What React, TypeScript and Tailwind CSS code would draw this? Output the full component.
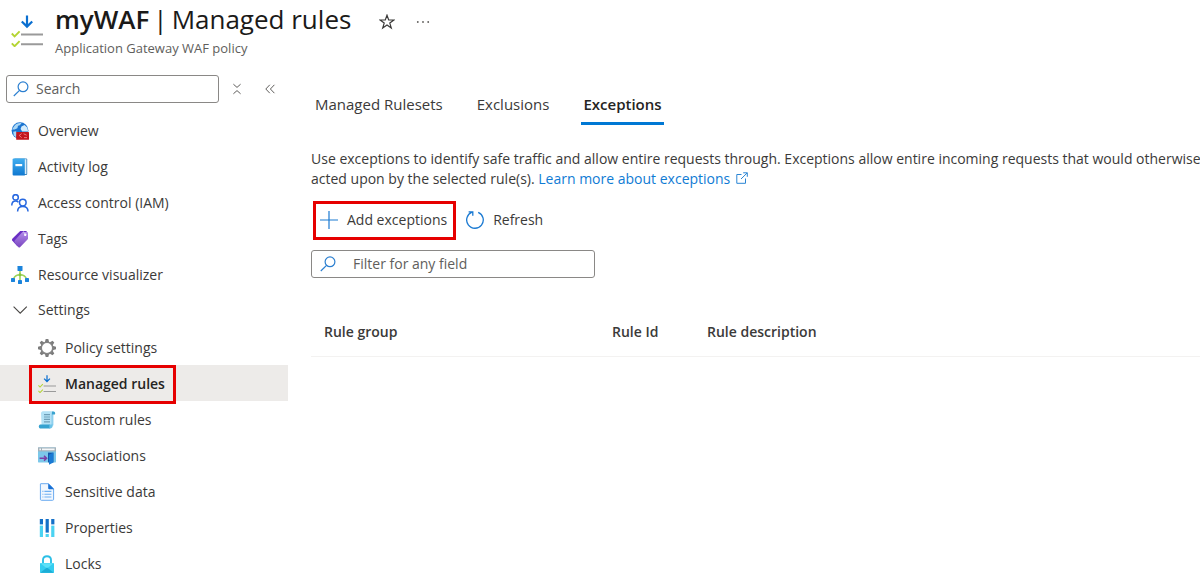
import type { ReactNode } from "react";

type IconProps = { className?: string };

const RulesIcon = ({ className = "size-[18px]" }: IconProps) => (
  <svg viewBox="0 0 32 32" className={className} fill="none" aria-hidden="true">
    <path d="M16 0.5V11M10.8 6.5L16 11.6L21.2 6.5" stroke="#0a6fd0" strokeWidth="2.2" />
    <path d="M10 19.5H32M10 29.3H32" stroke="#9a9a9a" strokeWidth="2" />
    <path d="M0.8 18.5L3.6 21.4L8.6 16.4M0.8 28.3L3.6 31.2L8.6 26.2" stroke="#b4d433" strokeWidth="1.9" />
  </svg>
);

const SearchIcon = ({ className = "size-4" }: IconProps) => (
  <svg viewBox="0 0 16 16" className={className} fill="none" stroke="#2b7fd0" strokeWidth="1.2" aria-hidden="true">
    <circle cx="10" cy="5.8" r="4.9" />
    <path d="M6.5 9.3L.8 15" />
  </svg>
);

const OverviewIcon = () => (
  <svg viewBox="0 0 18 18" className="size-[18px]" aria-hidden="true">
    <circle cx="9" cy="8.6" r="8.4" fill="#1b74d0" />
    <path d="M3 4.5C5 1.5 8 .8 10.5 1.2L8.8 3.2L7 3.8L6.4 6.2L3.6 7.4L1 7.6z" fill="#a9d7f6" />
    <path d="M10.5 4.5L13.5 3L16.2 5.6L17.2 9.6H11.2L9.6 7z" fill="#d5ecfb" />
    <path d="M2.2 9.8L5 9.2L6.2 11.5L5 15.2L2.8 13.4z" fill="#a9d7f6" />
    <rect x="5.2" y="10" width="12.8" height="7.8" rx=".6" fill="#c3161f" />
    <path d="M10.6 11.6L8.2 13.4L10.6 15.6M12.6 11.8L15.6 13.2M13 15.6H16" fill="none" stroke="#ee8588" strokeWidth=".9" />
  </svg>
);

const ActivityIcon = () => (
  <svg viewBox="0 0 18 18" className="size-[18px]" aria-hidden="true">
    <defs>
      <linearGradient id="book" x1="0" y1="0" x2="0" y2="1">
        <stop offset="0" stopColor="#41aef0" />
        <stop offset="1" stopColor="#0f78d0" />
      </linearGradient>
    </defs>
    <rect x="3" y=".4" width="13.2" height="16.6" rx="1" fill="#3c86bd" />
    <path d="M4 1.2H15.4V16H4z" fill="#dceefa" />
    <path d="M1.6 1.6Q1.6 .6 2.6 .6H13.8V17.6H2.6Q1.6 17.6 1.6 16.6z" fill="url(#book)" />
    <rect x="4.4" y="6" width="6.8" height="2.2" fill="#fff" />
  </svg>
);

const AccessIcon = () => (
  <svg viewBox="0 0 18 18" className="size-[18px]" fill="none" stroke="#2667e0" strokeWidth="1.5" aria-hidden="true">
    <circle cx="4.6" cy="3.4" r="2.7" />
    <path d="M.8 11.4C.8 8.4 2.4 7 4.6 7C5.8 7 6.8 7.5 7.4 8.2" />
    <circle cx="11.8" cy="8.6" r="3.3" />
    <path d="M6.6 17.6C6.6 14.4 8.8 12.4 11.8 12.4C14.8 12.4 17 14.4 17 17.6" />
  </svg>
);

const TagIcon = () => (
  <svg viewBox="0 0 18 18" className="size-[18px]" aria-hidden="true">
    <defs>
      <linearGradient id="tag" x1="0" y1="0" x2="0" y2="1">
        <stop offset="0" stopColor="#b18be8" />
        <stop offset="1" stopColor="#7a45c0" />
      </linearGradient>
    </defs>
    <path d="M9.2 1H15.2L16.4 2.2L6.5 16.4L1.2 10.5Q.6 9.6 1.3 8.8z" fill="#6a2fc4" />
    <path d="M11.4 2H15.8Q17 2 17 3.2V8.4Q17 9 16.5 9.5L9 17.2Q8.2 17.8 7.5 17.2L3.6 12.4Q3 11.4 3.7 10.6z" fill="url(#tag)" />
    <circle cx="14.2" cy="4.8" r="1.2" fill="#fff" />
    <path d="M14 4.6L12.4 1.4" stroke="#d9c5f7" strokeWidth=".8" />
  </svg>
);

const VisualizerIcon = () => (
  <svg viewBox="0 0 18 18" className="size-[18px]" aria-hidden="true">
    <path d="M9 5V14M2.6 13C3.4 10.2 5.8 8.8 9 8.8S14.6 10.2 15.4 13" fill="none" stroke="#9bd457" strokeWidth="1.6" />
    <circle cx="9" cy="8.8" r="1.5" fill="#86c440" />
    <g fill="#1b84dc">
      <rect x="6.5" y="0" width="5" height="5" rx=".4" />
      <rect x="0" y="12" width="4" height="4" rx=".4" />
      <rect x="7" y="14" width="4" height="4" rx=".4" />
      <rect x="14" y="12" width="4" height="4" rx=".4" />
    </g>
  </svg>
);

const GearIcon = () => (
  <svg viewBox="0 0 18 18" className="size-[18px]" aria-hidden="true">
    <g fill="#7c7c7c">
      {[0, 45, 90, 135, 180, 225, 270, 315].map((a) => (
        <path key={a} d="M6.8 3.6L7.7 0H10.3L11.2 3.6z" transform={`rotate(${a} 9 9)`} />
      ))}
    </g>
    <circle cx="9" cy="9" r="5.8" fill="#fff" stroke="#858585" strokeWidth="1.6" />
  </svg>
);

const ScrollIcon = () => (
  <svg viewBox="0 0 18 18" className="size-[18px]" aria-hidden="true">
    <path d="M4.4 .6H15.4V14.4H4.4z" fill="#8fd0ee" />
    <path d="M14 .6H15.6Q17.2 .8 17.2 2.4Q17.2 3.6 16 3.6H14z" fill="#3aa3cf" />
    <path d="M3 2.2Q3 .6 4.6 .6H14.4Q13.4 1.4 13.4 2.6V15H3.6z" fill="#b4e2f6" />
    <path d="M6 3.6H12M6 6H12M6 8.4H12M6 10.8H12" stroke="#6f9fb8" strokeWidth="1.2" />
    <path d="M2 13.6H12V17.4H2Q.8 17 .8 15.5T2 13.6z" fill="#35a2d0" />
    <path d="M11.4 13.6H14.8Q14.8 17.4 12.6 17.4H11.4z" fill="#6cc3e8" />
  </svg>
);

const AssociationsIcon = () => (
  <svg viewBox="0 0 18 18" className="size-[18px]" aria-hidden="true">
    <rect x="0" y=".4" width="18" height="15" rx=".6" fill="#7cc8ea" />
    <rect x="0" y=".4" width="18" height="4" fill="#a4b1b9" />
    <path d="M1.4 2.4H3M4 2.4H16.6" stroke="#f4f7f9" strokeWidth="1.7" />
    <path d="M10 5.6H15.4V15.4H10z" fill="#1558a8" />
    <path d="M11 7.8L15.4 5.6V15.4L11 17.8z" fill="#1a7ad4" />
    <path d="M1.6 11.2H8.4M6 8.8L8.6 11.2L6 13.6" fill="none" stroke="#7b3fa6" strokeWidth="1.5" />
  </svg>
);

const DocumentIcon = () => (
  <svg viewBox="0 0 18 18" className="size-[18px]" aria-hidden="true">
    <path d="M2.6 .7H10.6L15.6 5.7V16.3Q15.6 17.3 14.6 17.3H3.4Q2.4 17.3 2.4 16.3V.9z" fill="#f1f7fe" stroke="#6aaaf0" />
    <path d="M10.2 .4L16 6.2H11.2Q10.2 6.2 10.2 5.2z" fill="#176fd3" />
    <path d="M4.4 8.4H5.4M6.4 8.4H13.4M4.4 11.2H5.4M6.4 11.2H13.4M4.4 14H5.4M6.4 14H13.4" stroke="#6fb0f2" strokeWidth="1.1" />
  </svg>
);

const PropertiesIcon = () => (
  <svg viewBox="0 0 18 18" className="size-[18px]" aria-hidden="true">
    <g fill="#1470c8">
      <rect x="1.8" y="0" width="3.2" height="5.4" />
      <rect x="7.6" y="0" width="3.2" height="13.6" />
      <rect x="13.2" y="0" width="3.2" height="5.4" />
    </g>
    <g fill="#4bd3f2">
      <rect x="1.8" y="6.6" width="3.2" height="11.4" />
      <rect x="7.6" y="15" width="3.2" height="3" />
      <rect x="13.2" y="6.6" width="3.2" height="11.4" />
    </g>
  </svg>
);

const LockIcon = () => (
  <svg viewBox="0 0 18 18" className="size-[18px]" aria-hidden="true">
    <path d="M5 9V5Q5 1.2 9 1.2T13 5V9" fill="none" stroke="#2cbfe6" strokeWidth="1.9" />
    <rect x="2" y="8" width="14" height="10" rx=".8" fill="#35cdf0" />
    <path d="M2.4 8.3H15.6L9 13.4z" fill="#5de0f8" />
    <path d="M2.2 17.8L9 12.6L15.8 17.8z" fill="#1cadd6" />
  </svg>
);

const Callout = ({ className }: { className: string }) => (
  <span className={`pointer-events-none absolute border-3 border-[#e60000] ${className}`} />
);

const NavItem = ({ icon, label }: { icon: ReactNode; label: string }) => (
  <li>
    <a href="#" className="flex h-9 items-center gap-[9px] pt-px pl-[11px]">
      {icon}
      {label}
    </a>
  </li>
);

const SubItem = ({ icon, label, active }: { icon: ReactNode; label: string; active?: boolean }) => (
  <li className="relative">
    <a
      href="#"
      aria-current={active ? "page" : undefined}
      className={`flex h-9 items-center gap-[9px] pt-0.5 pl-[38px] ${active ? "bg-[#edebe9] font-semibold text-[#252423]" : ""}`}
    >
      {icon}
      {label}
    </a>
    {active && <Callout className="-bottom-[3px] left-[29px] h-[39px] w-[147px]" />}
  </li>
);

export default function App() {
  return (
    <div className="min-h-screen overflow-x-hidden bg-white font-['Open_Sans','Noto_Sans',sans-serif] text-sm text-[#3b3a39]">
      <header className="flex items-start gap-3 pl-[11px]">
        <RulesIcon className="mt-[15px] size-8" />
        <div>
          <div className="flex h-10 items-center">
            <h1 className="flex gap-1 text-[26px] text-[#1b1a19]">
              <span className="font-semibold">myWAF</span> <span>|</span> <span>Managed rules</span>
            </h1>
            <button type="button" aria-label="Add to favorites" className="ml-7">
              <svg viewBox="0 0 16 16" className="mt-1 size-4" fill="none" stroke="#3b3a39" strokeWidth="1.2" aria-hidden="true">
                <path d="M8 1.2L9.7 6H14.9L10.8 9.1L12.3 14.1L8 11.1L3.7 14.1L5.2 9.1L1.1 6H6.3z" />
              </svg>
            </button>
            <button type="button" aria-label="More options" className="ml-[21px]">
              <svg viewBox="0 0 14 4" className="mt-1 h-1 w-3.5" fill="#605e5c" aria-hidden="true">
                <circle cx="1.8" cy="2" r=".9" />
                <circle cx="7" cy="2" r=".9" />
                <circle cx="12.2" cy="2" r=".9" />
              </svg>
            </button>
          </div>
          <p className="text-[13px] leading-4 text-[#605e5c]">Application Gateway WAF policy</p>
        </div>
      </header>

      <div className="flex items-start pt-[19px]">
        <nav aria-label="Resource menu" className="w-72 shrink-0">
          <div className="flex items-center pl-1.5">
            <label className="flex h-7 w-[213px] items-center gap-[7px] rounded-[3px] border border-[#8a8886] pl-1.5">
              <SearchIcon className="size-4 shrink-0" />
              <input type="text" aria-label="Search" placeholder="Search" className="w-full min-w-0 outline-none placeholder:text-[#605e5c]" />
            </label>
            <button type="button" aria-label="Collapse groups" className="ml-3">
              <svg viewBox="0 0 12 12" className="size-3" fill="none" stroke="#605e5c" aria-hidden="true">
                <path d="M2.4 1.2L6 4.4L9.6 1.2M2.4 10.8L6 7.6L9.6 10.8" />
              </svg>
            </button>
            <button type="button" aria-label="Collapse menu" className="ml-[21px]">
              <svg viewBox="0 0 12 12" className="size-3" fill="none" stroke="#605e5c" aria-hidden="true">
                <path d="M5.8 1.8L1.8 6L5.8 10.2M10.4 1.8L6.4 6L10.4 10.2" />
              </svg>
            </button>
          </div>
          <ul className="pt-[9px]">
            <NavItem icon={<OverviewIcon />} label="Overview" />
            <NavItem icon={<ActivityIcon />} label="Activity log" />
            <NavItem icon={<AccessIcon />} label="Access control (IAM)" />
            <NavItem icon={<TagIcon />} label="Tags" />
            <NavItem icon={<VisualizerIcon />} label="Resource visualizer" />
          </ul>
          <button type="button" aria-expanded="true" className="flex h-9 items-center gap-[9px] pl-[11px]">
            <svg viewBox="0 0 18 18" className="size-[18px]" fill="none" stroke="#494745" strokeWidth="1.1" aria-hidden="true">
              <path d="M2.6 5.6L9.2 12.2L15.8 5.6" />
            </svg>
            Settings
          </button>
          <ul className="pt-px">
            <SubItem icon={<GearIcon />} label="Policy settings" />
            <SubItem icon={<RulesIcon />} label="Managed rules" active />
            <SubItem icon={<ScrollIcon />} label="Custom rules" />
            <SubItem icon={<AssociationsIcon />} label="Associations" />
            <SubItem icon={<DocumentIcon />} label="Sensitive data" />
            <SubItem icon={<PropertiesIcon />} label="Properties" />
            <SubItem icon={<LockIcon />} label="Locks" />
          </ul>
        </nav>

        <main className="min-w-0 flex-1 pt-3 pl-[23px]">
          <div role="tablist" className="flex gap-[30px] pl-0.5 text-[15px]">
            <button type="button" role="tab" aria-selected="false" className="h-[38px] border-b-3 border-transparent px-0.5">
              Managed Rulesets
            </button>
            <button type="button" role="tab" aria-selected="false" className="h-[38px] border-b-3 border-transparent px-0.5">
              Exclusions
            </button>
            <button type="button" role="tab" aria-selected="true" className="h-[38px] border-b-3 border-[#0078d4] px-0.5 font-semibold text-[#252423]">
              Exceptions
            </button>
          </div>

          <p className="-mr-4 pt-6 leading-5">
            Use exceptions to identify safe traffic and allow entire requests through. Exceptions allow entire incoming requests that would otherwise
            acted upon by the selected rule(s).{" "}
            <a href="#" className="text-[#0f7bd4]">
              Learn more about exceptions
              <svg viewBox="0 0 12 12" className="mb-1 ml-1.5 inline size-3" fill="none" stroke="#2b85d4" aria-hidden="true">
                <path d="M5.5 2.5H.8V11.3H9.5V6.5M7.2 .8H11.3V4.8M11.2 .9L5 7" />
              </svg>
            </a>
          </p>

          <div className="flex h-[61px] items-center gap-[19px] pl-[9px]">
            <button type="button" className="relative flex items-center gap-[9px]">
              <svg viewBox="0 0 18 18" className="size-[18px]" fill="none" stroke="#1b7ad2" strokeWidth="1.2" aria-hidden="true">
                <path d="M9 0V18M0 9H18" />
              </svg>
              Add exceptions
              <Callout className="-top-[9px] -left-[7px] h-[39px] w-[143px]" />
            </button>
            <button type="button" className="flex items-center gap-[9px]">
              <svg viewBox="0 0 18 18" className="size-[18px]" fill="none" stroke="#1b7ad2" strokeWidth="1.3" aria-hidden="true">
                <path d="M12.2 1.3A8.3 8.3 0 1 1 6 1.2M2.6 .8H6.8V4.8" />
              </svg>
              Refresh
            </button>
          </div>

          <label className="flex h-7 w-[284px] items-center gap-[17px] rounded-[3px] border border-[#8a8886] pl-2">
            <SearchIcon className="size-4 shrink-0" />
            <input type="text" aria-label="Filter" placeholder="Filter for any field" className="w-full min-w-0 outline-none placeholder:text-[#605e5c]" />
          </label>

          <table className="mt-[30px] w-full table-fixed text-left">
            <thead>
              <tr className="h-12 border-b border-[#f3f2f1]">
                <th scope="col" className="w-[288px] pl-[13px] font-semibold">Rule group</th>
                <th scope="col" className="w-[95px] pl-[13px] font-semibold">Rule Id</th>
                <th scope="col" className="pl-[13px] font-semibold">Rule description</th>
              </tr>
            </thead>
          </table>
        </main>
      </div>
    </div>
  );
}
